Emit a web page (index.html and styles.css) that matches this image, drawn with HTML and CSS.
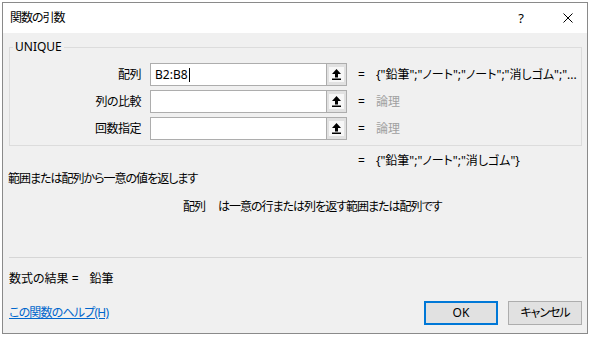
FILE: index.html
```html
<!DOCTYPE html>
<html lang="ja">
<head>
<meta charset="utf-8">
<title>関数の引数</title>
<link rel="stylesheet" href="styles.css">
</head>
<body>
<div class="dialog">
  <div class="titlebar">
    <span class="title">関数の引数</span>
    <span class="help">?</span>
    <svg class="close" width="10" height="10" viewBox="0 0 10 10"><path d="M0.5 0.5 L9.5 9.5 M9.5 0.5 L0.5 9.5" stroke="#000" stroke-width="1" fill="none"/></svg>
  </div>
  <div class="content">
    <fieldset class="group">
      <legend class="legend">UNIQUE</legend>
      <div class="arg-grid">
        <span class="arg-label">配列</span>
        <div class="arg-input"><span class="field">B2:B8<span class="caret"></span></span><span class="ref-btn"><span class="ref-inner"><svg width="9" height="11" viewBox="0 0 9 11"><path d="M4.5 0 L9 5 L6 5 L6 8.5 L3 8.5 L3 5 L0 5 Z" fill="#000"/><rect x="0" y="9.5" width="9" height="1.5" fill="#000"/></svg></span></span></div>
        <span class="eq">=</span>
        <span class="arg-value">{"鉛筆";"ノート";"ノート";"消しゴム";"...</span>

        <span class="arg-label">列の比較</span>
        <div class="arg-input"><span class="field"></span><span class="ref-btn"><span class="ref-inner"><svg width="9" height="11" viewBox="0 0 9 11"><path d="M4.5 0 L9 5 L6 5 L6 8.5 L3 8.5 L3 5 L0 5 Z" fill="#000"/><rect x="0" y="9.5" width="9" height="1.5" fill="#000"/></svg></span></span></div>
        <span class="eq">=</span>
        <span class="arg-value muted">論理</span>

        <span class="arg-label">回数指定</span>
        <div class="arg-input"><span class="field"></span><span class="ref-btn"><span class="ref-inner"><svg width="9" height="11" viewBox="0 0 9 11"><path d="M4.5 0 L9 5 L6 5 L6 8.5 L3 8.5 L3 5 L0 5 Z" fill="#000"/><rect x="0" y="9.5" width="9" height="1.5" fill="#000"/></svg></span></span></div>
        <span class="eq">=</span>
        <span class="arg-value muted">論理</span>
      </div>
    </fieldset>
    <div class="result-row"><span class="eq">=</span><span class="result-value">{"鉛筆";"ノート";"消しゴム"}</span></div>
    <p class="desc">範囲または配列から一意の値を返します</p>
    <p class="arg-desc"><span class="arg-name">配列</span><span>は一意の行または列を返す範囲または配列です</span></p>
    <div class="separator"></div>
    <p class="formula-result"><span>数式の結果 =</span><span class="formula-value">鉛筆</span></p>
    <div class="footer">
      <a class="help-link" href="#">この関数のヘルプ(H)</a>
      <div class="buttons">
        <button class="btn btn-default">OK</button>
        <button class="btn btn-cjk">キャンセル</button>
      </div>
    </div>
  </div>
</div>
</body>
</html>
```
FILE: styles.css
```css
* { box-sizing: border-box; }
html, body {
  margin: 0;
  padding: 0;
  background: #ffffff;
}
body {
  width: 593px;
  height: 338px;
  overflow: hidden;
  font-family: "Noto Sans", "Noto Sans CJK JP", sans-serif;
  font-size: 12px;
  line-height: 16px;
  font-feature-settings: "palt";
  color: #000;
}
.dialog {
  margin: 2px 0 0 2px;
  width: 586px;
  height: 332px;
  border: 1px solid #8a8a8a;
  background: #f0f0f0;
  display: flex;
  flex-direction: column;
}
.titlebar {
  height: 30px;
  background: #ffffff;
  display: flex;
  align-items: center;
  padding-left: 7px;
}
.title {
  flex: 1;
  letter-spacing: -1px;
}
.help {
  font-size: 13px;
  margin-right: 39px;
}
.close { margin-right: 14px; }
.content {
  flex: 1;
  display: flex;
  flex-direction: column;
  padding: 0 5px 0 6px;
}
.group {
  margin: 6px 0 0 0;
  padding: 8px 0 5px 0;
  border: 1px solid #dcdcdc;
  min-width: 0;
}
.legend {
  margin-left: 3px;
  padding: 0 2px;
  line-height: 16px;
}
.arg-grid {
  display: grid;
  grid-template-columns: 140px 197px 18px 1fr;
  grid-auto-rows: 23px;
  row-gap: 4px;
  align-items: center;
}
.arg-label {
  text-align: right;
  padding-right: 9px;
  letter-spacing: -0.5px;
}
.arg-input {
  height: 23px;
  display: flex;
  border: 1px solid #adadad;
  background: #fff;
}
.field {
  flex: 1;
  display: flex;
  align-items: center;
  padding-left: 4px;
}
.caret {
  display: inline-block;
  width: 1px;
  height: 14px;
  background: #000;
  margin-left: 1px;
}
.ref-btn {
  width: 20px;
  background: #e1e1e1;
  border-left: 1px solid #adadad;
  display: flex;
  align-items: center;
  justify-content: center;
}
.ref-inner {
  width: 15px;
  height: 15px;
  background: #f7f7f7;
  display: flex;
  align-items: center;
  justify-content: center;
}
.eq { padding-left: 11px; }
.arg-value {
  padding-left: 11px;
  white-space: nowrap;
  overflow: hidden;
}
.muted { color: #a0a0a0; }
.result-row {
  margin: 7px 0 0 338px;
  display: flex;
}
.result-value { margin-left: 11px; }
.result-row .eq { padding-left: 11px; }
.desc {
  margin: 2px 0 0 -1px;
  letter-spacing: -1px;
}
.arg-desc {
  margin: 12px 0 0 174px;
  display: flex;
  letter-spacing: -1px;
}
.arg-name { margin-right: 13px; }
.separator {
  margin-top: 42px;
  height: 1px;
  background: #d6d6d6;
}
.formula-result {
  margin: 13px 0 0 0;
  display: flex;
}
.formula-value { margin-left: 11px; }
.footer {
  margin-top: 14px;
  height: 24px;
  display: flex;
  align-items: center;
  justify-content: space-between;
}
.help-link {
  color: #0066cc;
  text-decoration: underline;
  letter-spacing: -0.8px;
}
.buttons {
  display: flex;
  gap: 10px;
}
.btn {
  width: 74px;
  height: 24px;
  border: 1px solid #adadad;
  background: #e1e1e1;
  font: inherit;
  color: #000;
  padding: 0;
}
.btn-cjk { letter-spacing: -1px; }
.btn-default {
  border: 2px solid #0078d7;
}
```
